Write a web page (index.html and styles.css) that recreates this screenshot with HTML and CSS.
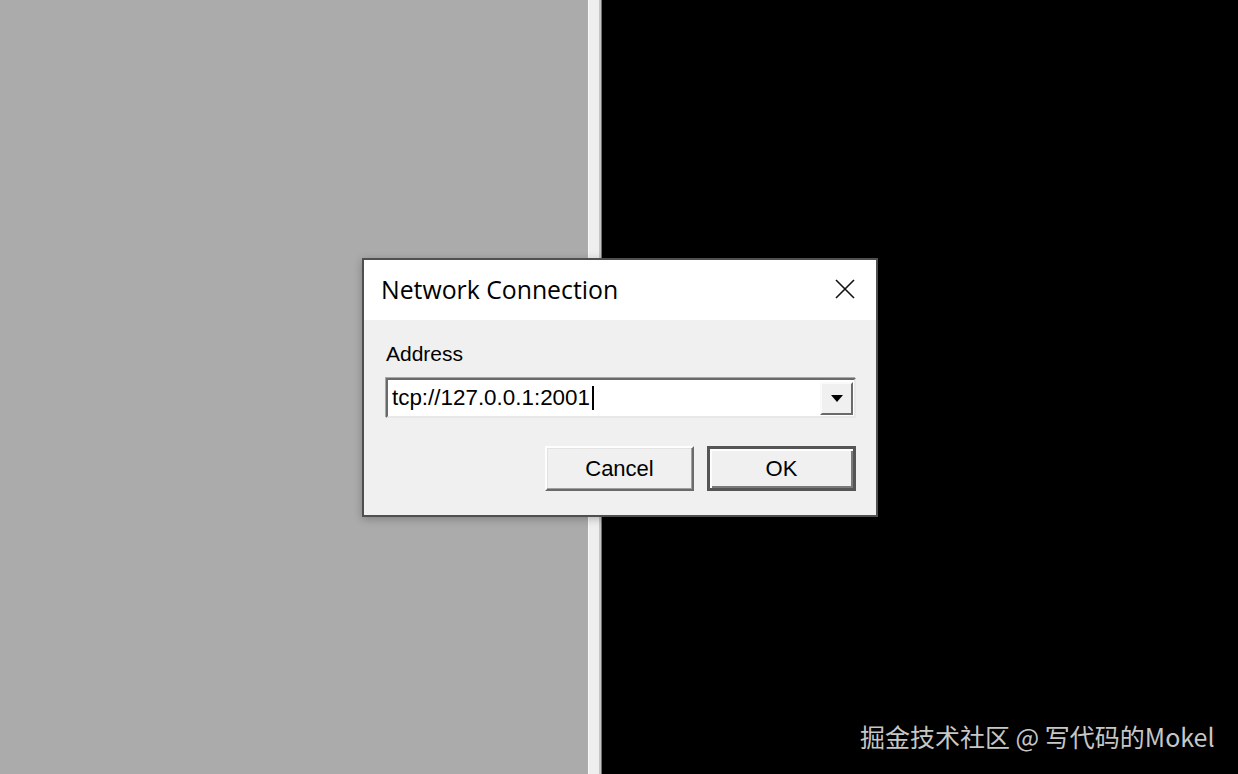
FILE: index.html
```html
<!DOCTYPE html>
<html lang="en">

<head>
    <meta charset="UTF-8">
    <meta name="viewport" content="width=device-width, initial-scale=1.0">
    <title>Network Connection</title>
    <link rel="stylesheet" href="styles.css">
</head>

<body>
    <div class="desktop">
        <div class="pane-left"></div>
        <div class="splitter"></div>
        <div class="pane-right"></div>
    </div>

    <div class="dialog">
        <div class="titlebar">
            <span class="title">Network Connection</span>
            <svg class="close" width="20" height="20" viewBox="0 0 20 20">
                <path d="M1 1 L19 19 M19 1 L1 19" stroke="#111" stroke-width="1.6" fill="none" />
            </svg>
        </div>
        <div class="dialog-body">
            <div class="label">Address</div>
            <div class="combo">
                <div class="combo-text">tcp://127.0.0.1:2001<span class="caret"></span></div>
                <div class="combo-btn">
                    <svg width="12" height="7" viewBox="0 0 12 7">
                        <path d="M0 0 L12 0 L6 7 Z" fill="#000" />
                    </svg>
                </div>
            </div>
            <div class="buttons">
                <div class="btn">Cancel</div>
                <div class="btn btn-default">OK</div>
            </div>
        </div>
    </div>

    <div class="watermark">掘金技术社区 @ 写代码的Mokel</div>
</body>

</html>
```

FILE: styles.css
```css
body {
    margin: 0;
    padding: 0;
    width: 1238px;
    height: 774px;
    overflow: hidden;
    position: relative;
    font-family: "Liberation Sans", Arial, sans-serif;
}

.desktop {
    display: flex;
    height: 100%;
}

.pane-left {
    width: 588px;
    background: #ababab;
}

.splitter {
    width: 10px;
    background: #eeeeee;
    border-left: 1px solid #f8f8f8;
    border-right: 2px solid #c4c4c4;
    box-shadow: 2px 0 0 #707070;
}

.pane-right {
    flex: 1;
    margin-left: 1px;
    background: #000;
}

/* dialog sits over the desktop */
.dialog {
    position: absolute;
    left: 362px;
    top: 258px;
    width: 512px;
    border: 2px solid #4f4f4f;
    background: #f0f0f0;
    box-shadow: 0 2px 8px rgba(0, 0, 0, 0.25);
}

.titlebar {
    height: 60px;
    background: #fff;
    display: flex;
    align-items: center;
    justify-content: space-between;
    padding: 0 21px 0 17px;
}

.title {
    font-family: "Open Sans", "Noto Sans", sans-serif;
    font-size: 24.8px;
    color: #000;
    margin-top: -2px;
}

.close {
    margin-top: -3px;
}

.dialog-body {
    padding: 22px 20px 24px 22px;
    display: flex;
    flex-direction: column;
}

.label {
    font-size: 21px;
    line-height: 24px;
    color: #000;
    margin-bottom: 12px;
}

.combo {
    height: 36px;
    display: flex;
    align-items: center;
    background: #fff;
    border: 2px solid;
    border-color: #6a6a6a #e8e8e8 #e8e8e8 #6a6a6a;
    box-shadow: -1px -1px 0 #a8a8a8;
}

.combo-text {
    flex: 1;
    padding-left: 4px;
    font-size: 22.4px;
    color: #000;
    display: flex;
    align-items: center;
}

.caret {
    display: inline-block;
    width: 2px;
    height: 24px;
    background: #000;
    margin-left: 2px;
}

.combo-btn {
    width: 29px;
    height: 29px;
    margin-right: 1px;
    background: #f0f0f0;
    border: 2px solid;
    border-color: #fafafa #6a6a6a #6a6a6a #fafafa;
    display: flex;
    align-items: center;
    justify-content: center;
}

.buttons {
    display: flex;
    justify-content: flex-end;
    gap: 13px;
    margin-top: 28px;
}

.btn {
    width: 145px;
    height: 41px;
    box-sizing: content-box;
    background: #f0f0f0;
    border: 2px solid;
    border-color: #fdfdfd #6a6a6a #6a6a6a #fdfdfd;
    box-shadow: inset -1px -1px 0 #a0a0a0, inset 1px 1px 0 #e3e3e3;
    display: flex;
    align-items: center;
    justify-content: center;
    font-size: 22px;
    color: #000;
}

.btn-default {
    width: 143px;
    height: 39px;
    border-width: 3px;
    border-color: #555;
    box-shadow: inset 2px 2px 0 #fdfdfd, inset -2px -2px 0 #7a7a7a;
}

.watermark {
    position: absolute;
    left: 860px;
    top: 718px;
    font-family: "Noto Sans CJK SC", "Noto Sans", sans-serif;
    font-size: 25px;
    color: rgba(255, 255, 255, 0.78);
    white-space: nowrap;
}
```
